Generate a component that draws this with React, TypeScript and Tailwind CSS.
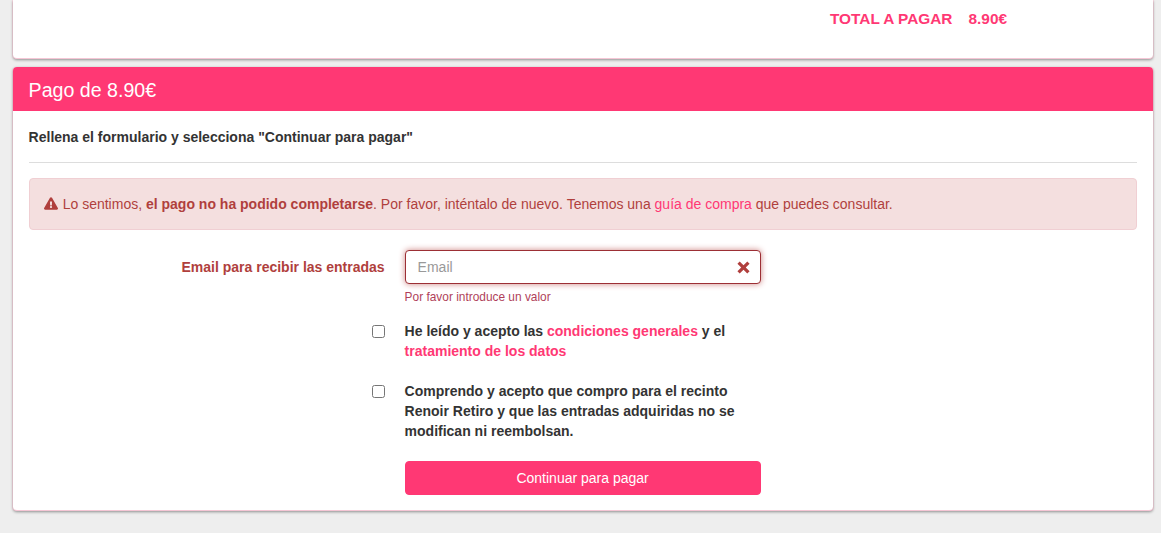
import React from "react";

function Warn() {
  return (
    <svg width="14" height="13" viewBox="0 0 576 512" className="inline-block -ml-[0.5px] mr-[4.6px] -mt-[3px] fill-[#b03f3d]">
      <path d="M569.5 440C588 472 564.8 512 527.9 512H48.1c-36.9 0-60-40.100-41.600-72L246.400 24c18.500-32 64.700-32 83.200 0l239.900 416zM288 354c-25.400 0-46 20.600-46 46s20.600 46 46 46 46-20.600 46-46-20.600-46-46-46zm-43.700-165.300l7.400 136c.3 6.400 5.600 11.300 12 11.300h48.500c6.400 0 11.600-5 12-11.300l7.400-136c.4-6.900-5.100-12.700-12-12.700h-63.400c-6.900 0-12.400 5.800-12 12.700z" />
    </svg>
  );
}

export default function App() {
  return (
    <div className="min-h-[533px] bg-[#eeeeee] pl-[12.6px] pr-[8px] font-['Liberation_Sans',Arial,sans-serif] text-[14px] text-[#333333]">
      <div className="h-[59px] rounded-b-[4px] border-b border-[#f5c6d5] bg-white shadow-[0_1px_3px_rgba(0,0,0,0.4),1px_0_0_#fbdde6,-1px_0_0_#fbdde6] flex justify-end pr-[146px] pt-[10px]">
        <div className="text-[15.4px] font-bold text-[#ff3874] leading-[18px]">
          <span className="mr-4">TOTAL A PAGAR</span>
          <span>8.90€</span>
        </div>
      </div>
      <div className="mt-2 h-[444px] rounded-[4px] border-b border-[#f5c6d5] bg-white shadow-[0_1px_3px_rgba(0,0,0,0.4),1px_0_0_#fbdde6,-1px_0_0_#fbdde6]">
        <div className="h-[44px] rounded-t-[4px] bg-[#ff3874] px-4 pt-[12px] leading-[22px] text-[19.6px] text-white">Pago de 8.90€</div>
        <div className="px-4">
          <div className="h-[52px] border-b border-[#dddddd] pt-[16px] font-bold leading-[20px]">
            Rellena el formulario y selecciona "Continuar para pagar"
          </div>
          <div className="mt-[15px] h-[52px] rounded-[4px] border border-[#f0cfd3] bg-[#f4dfdf] px-[15px] flex items-center text-[#b03f3d]">
            <span>
              <Warn />
              Lo sentimos, <b>el pago no ha podido completarse</b>. Por favor, inténtalo de nuevo. Tenemos una{" "}
              <span className="text-[#ff3874]">guía de compra</span> que puedes consultar.
            </span>
          </div>
          <div className="mt-5 grid grid-cols-[356px_356px] gap-x-[20px]">
            <label className="h-[34px] flex items-center justify-end font-bold text-[#b03f3d]">Email para recibir las entradas</label>
            <div>
              <div className="relative">
                <input
                  placeholder="Email"
                  className="block h-[34px] w-full rounded-[4px] border border-[#9c2f35] bg-white px-3 text-[14px] shadow-[0_0_6px_#ce8483] placeholder:text-[#999999] outline-none"
                />
                <svg viewBox="0 0 12 12" width="13" height="13" className="absolute right-[11px] top-[10.5px] fill-[#b03f3d]">
                  <path d="M2.500 0.400 6 3.900 9.500 0.400 11.600 2.500 8.100 6 11.600 9.500 9.500 11.600 6 8.100 2.500 11.600 0.400 9.500 3.900 6 0.400 2.500Z" />
                </svg>
              </div>
              <div className="mt-[5px] text-[11.9px] leading-[16px] text-[#b03f5a]">Por favor introduce un valor</div>
            </div>
            <div className="mt-[16px] flex justify-end">
              <input type="checkbox" className="mt-[4px] h-[13px] w-[13px]" />
            </div>
            <div className="mt-[16px] font-bold leading-[20px]">
              He leído y acepto las <span className="text-[#ff3874]">condiciones generales</span> y el{" "}
              <span className="text-[#ff3874]">tratamiento de los datos</span>
            </div>
            <div className="mt-5 flex justify-end">
              <input type="checkbox" className="mt-[4px] h-[13px] w-[13px]" />
            </div>
            <div className="mt-5 font-bold leading-[20px]">
              Comprendo y acepto que compro para el recinto Renoir Retiro y que las entradas adquiridas no se modifican ni reembolsan.
            </div>
            <div />
            <button className="mt-5 h-[34px] rounded-[4px] border border-[#ff3874] bg-[#ff3874] text-white text-[14px]">Continuar para pagar</button>
          </div>
        </div>
      </div>
    </div>
  );
}
